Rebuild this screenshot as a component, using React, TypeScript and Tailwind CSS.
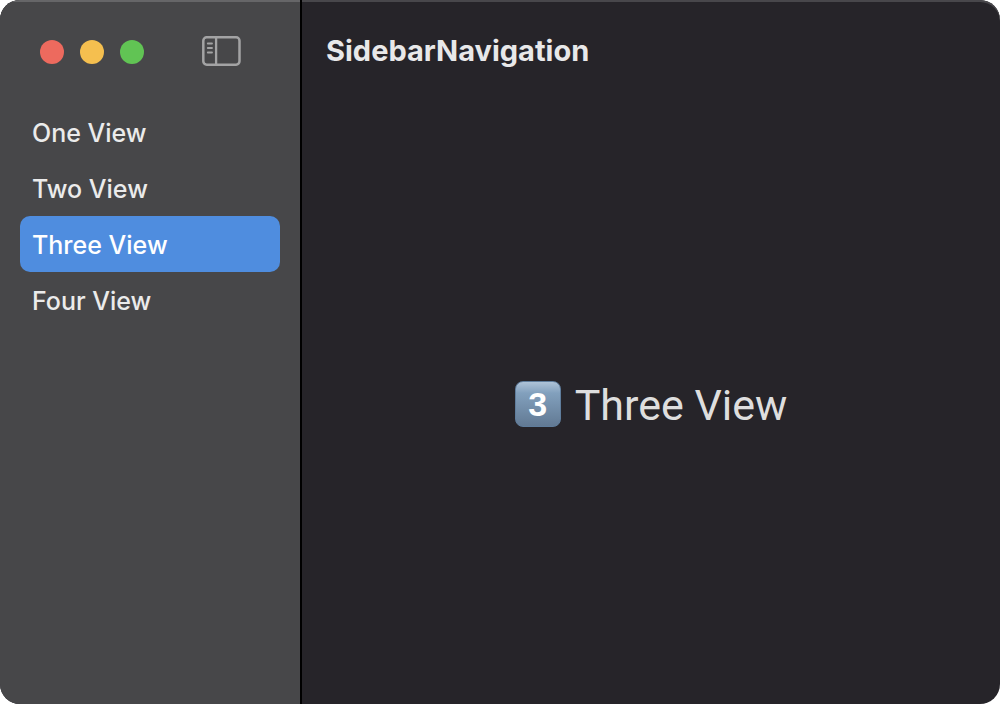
import { useState } from "react";
import clsx from "clsx";

const views = [
  { digit: "1", name: "One View" },
  { digit: "2", name: "Two View" },
  { digit: "3", name: "Three View" },
  { digit: "4", name: "Four View" },
];

function WindowControls() {
  return (
    <div className="flex gap-4">
      <button type="button" aria-label="Close" className="size-6 rounded-full bg-[#ed6a5e]" />
      <button type="button" aria-label="Minimize" className="size-6 rounded-full bg-[#f5bf4f]" />
      <button type="button" aria-label="Zoom" className="size-6 rounded-full bg-[#61c454]" />
    </div>
  );
}

function SidebarIcon() {
  return (
    <svg width="40" height="30" viewBox="0 0 40 30" fill="none" stroke="#a3a3a4" aria-hidden="true">
      <rect x="2.3" y="1.3" width="36.2" height="27.4" rx="3.4" strokeWidth="2.5" />
      <path d="M15.1 1.5v27" strokeWidth="2.3" />
      <path d="M6.8 7.5h4.2M6.8 12h4.2M6.8 16.5h4.2" strokeWidth="1.9" strokeLinecap="round" />
    </svg>
  );
}

function Keycap({ digit }: { digit: string }) {
  return (
    <span className="flex size-[46px] items-center justify-center rounded-lg border border-[#5f7d9c] bg-linear-to-b from-[#aec3d8] from-0% via-[#82a0bd] via-25% to-[#627a94] font-['Liberation_Sans',sans-serif] text-[34px] leading-none font-bold text-white">
      {digit}
    </span>
  );
}

export default function App() {
  const [selected, setSelected] = useState(2);
  const view = views[selected];

  return (
    <div className="min-h-screen bg-white font-['Inter',sans-serif]">
      <div className="flex min-h-screen overflow-hidden rounded-[20px] bg-[#262429] shadow-[inset_0_2px_0_#48474b]">
        <aside className="w-[302px] shrink-0 border-r-2 border-black bg-[#474749] shadow-[inset_0_2px_0_#666668]">
          <div className="flex h-[104px] items-start justify-between pt-9 pr-[59px] pl-10">
            <div className="pt-1">
              <WindowControls />
            </div>
            <button type="button" aria-label="Toggle sidebar">
              <SidebarIcon />
            </button>
          </div>
          <nav className="flex flex-col px-5">
            {views.map((item, index) => (
              <button
                key={item.name}
                type="button"
                aria-current={index === selected ? "page" : undefined}
                onClick={() => setSelected(index)}
                className={clsx(
                  "h-14 rounded-[10px] px-3 pt-1 text-left text-[25px] font-medium",
                  index === selected ? "bg-[#4f8ddf] text-white" : "text-[#ebebeb]",
                )}
              >
                {item.name}
              </button>
            ))}
          </nav>
        </aside>
        <main className="flex grow flex-col">
          <header className="flex h-[104px] items-center px-6 pb-0.5">
            <h1 className="text-[29px] font-bold text-[#e8e8e9]">SidebarNavigation</h1>
          </header>
          <div className="flex grow items-center justify-center gap-3.5">
            <Keycap digit={view.digit} />
            <p className="pt-0.5 font-['Roboto',sans-serif] text-[43px] text-[#dedede]">{view.name}</p>
          </div>
        </main>
      </div>
    </div>
  );
}
